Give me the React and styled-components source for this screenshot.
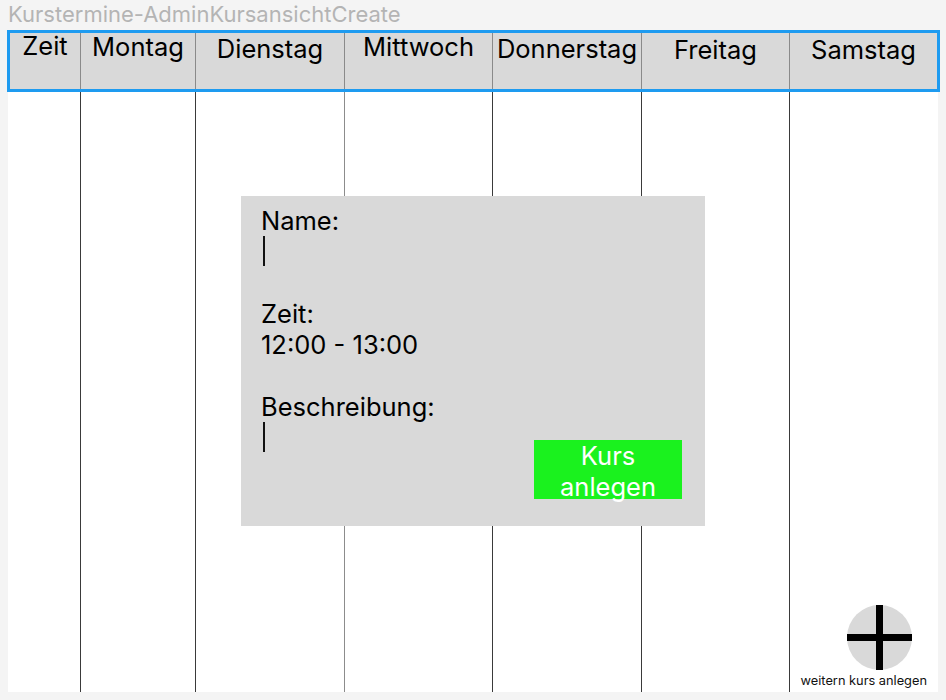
import React from 'react';
import styled, { createGlobalStyle } from 'styled-components';

const GlobalStyle = createGlobalStyle`
  html, body {
    margin: 0;
    padding: 0;
    background: #f4f4f4;
    font-family: Inter, "Noto Sans", sans-serif;
  }
`;

const Page = styled.div`
  width: 946px;
  height: 700px;
  padding: 0 8px;
  box-sizing: border-box;
  overflow: hidden;
`;

const Title = styled.div`
  height: 30px;
  font-size: 22px;
  line-height: 28px;
  color: #b4b4b4;
  white-space: nowrap;
`;

const Frame = styled.div`
  position: relative;
  width: 930px;
  height: 662px;
  background: #ffffff;
  display: flex;
  flex-direction: column;
`;

const COLS = '72px 115px 149px 148px 149px 148px 149px';
const HEAD_COLS = '70px 115px 149px 148px 149px 148px 148px';

const Header = styled.div`
  display: grid;
  grid-template-columns: ${HEAD_COLS};
  height: 62px;
  margin: 0 -2px 0 -1px;
  border: 3px solid #1e9bf0;
  background: #d9d9d9;
  box-sizing: border-box;
`;

const HeadCell = styled.div`
  border-left: ${(p) => (p.$first ? 'none' : '1px solid #8a8a8a')};
  text-align: center;
  font-size: 25.5px;
  line-height: 26px;
  padding-top: ${(p) => p.$pt || 0}px;
  color: #000;
  white-space: nowrap;
  overflow: visible;
`;

const Body = styled.div`
  flex: 1;
  display: grid;
  grid-template-columns: ${COLS};
`;

const Column = styled.div`
  border-left: ${(p) => (p.$first ? 'none' : `1px solid ${p.$light ? '#8c8c8c' : '#3a3a3a'}`)};
`;

const Modal = styled.div`
  position: absolute;
  left: 233px;
  top: 166px;
  width: 464px;
  height: 330px;
  box-sizing: border-box;
  padding: 9px 23px 27px 20px;
  background: #d9d9d9;
  display: flex;
  justify-content: space-between;
  align-items: flex-end;
`;

const Fields = styled.div`
  align-self: flex-start;
  font-size: 25.5px;
  line-height: 31px;
  color: #000;
`;

const Line = styled.div`
  height: 31px;
  white-space: nowrap;
`;

const Caret = styled.span`
  display: inline-block;
  width: 2px;
  height: 30px;
  margin-left: 2px;
  background: #111;
  vertical-align: top;
`;

const CreateButton = styled.button`
  width: 148px;
  height: 59px;
  padding: 0;
  border: none;
  background: #1af21e;
  color: #ffffff;
  font-family: inherit;
  font-size: 25.5px;
  line-height: 31px;
  text-align: center;
  overflow: visible;
`;

const Fab = styled.div`
  position: absolute;
  right: 11px;
  bottom: 4px;
  display: flex;
  flex-direction: column;
  align-items: flex-end;
`;

const Circle = styled.div`
  width: 65px;
  height: 65px;
  margin-right: 15px;
  border-radius: 50%;
  background: #d9d9d9;
  display: flex;
  align-items: center;
  justify-content: center;
`;

const FabLabel = styled.div`
  margin-top: 3px;
  font-size: 12.8px;
  line-height: 15px;
  color: #111;
  white-space: nowrap;
`;

const days = [
  { name: 'Zeit', pt: 0 },
  { name: 'Montag', pt: 1 },
  { name: 'Dienstag', pt: 3 },
  { name: 'Mittwoch', pt: 1 },
  { name: 'Donnerstag', pt: 3 },
  { name: 'Freitag', pt: 4 },
  { name: 'Samstag', pt: 4 },
];

const App = () => {
  return (
    <Page>
      <GlobalStyle />
      <Title>Kurstermine-AdminKursansichtCreate</Title>
      <Frame>
        <Header>
          {days.map((d, i) => (
            <HeadCell key={d.name} $first={i === 0} $pt={d.pt}>
              {d.name}
            </HeadCell>
          ))}
        </Header>
        <Body>
          {days.map((d, i) => (
            <Column key={d.name} $first={i === 0} $light={i === 3} />
          ))}
        </Body>

        <Modal>
          <Fields>
            <Line>Name:</Line>
            <Line><Caret /></Line>
            <Line />
            <Line>Zeit:</Line>
            <Line>12:00 - 13:00</Line>
            <Line />
            <Line>Beschreibung:</Line>
            <Line><Caret /></Line>
          </Fields>
          <CreateButton>Kurs<br />anlegen</CreateButton>
        </Modal>

        <Fab>
          <Circle>
            <svg width="65" height="65" viewBox="0 0 65 65">
              <rect x="29" y="0" width="7" height="65" fill="#000" />
              <rect x="0" y="29" width="65" height="7" fill="#000" />
            </svg>
          </Circle>
          <FabLabel>weitern kurs anlegen</FabLabel>
        </Fab>
      </Frame>
    </Page>
  );
};

export default App;
